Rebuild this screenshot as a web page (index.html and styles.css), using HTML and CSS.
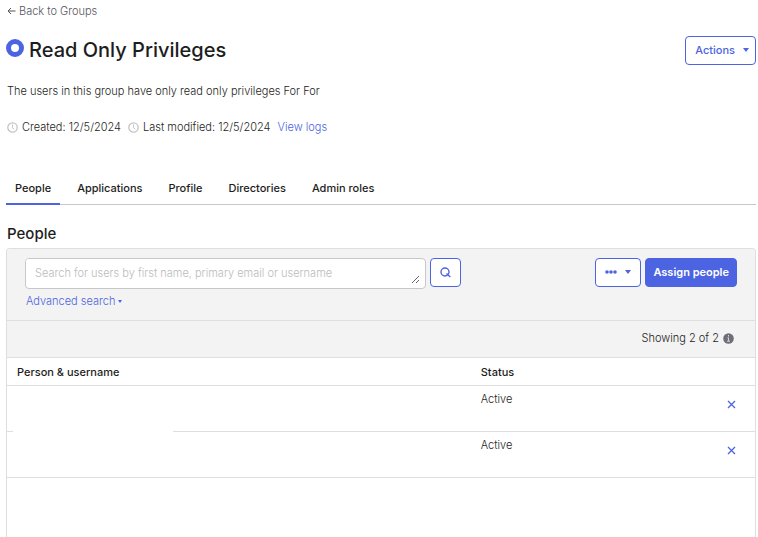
FILE: index.html
```html
<!DOCTYPE html>
<html lang="en">
<head>
    <meta charset="UTF-8">
    <meta name="viewport" content="width=device-width, initial-scale=1.0">
    <title>Read Only Privileges</title>
    <link rel="stylesheet" href="styles.css">
</head>
<body>
    <a href="#" class="back-link">
        <svg width="9" height="8" viewBox="0 0 9 8"><path d="M8.5 4H1M4 1L1 4l3 3" fill="none" stroke="currentColor"/></svg>
        Back to Groups
    </a>

    <header class="group-header">
        <svg class="group-icon" width="18" height="18" viewBox="0 0 18 18"><circle cx="9" cy="9" r="6.5" fill="none" stroke="#4c64e1" stroke-width="5"/></svg>
        <h1>Read Only Privileges</h1>
        <button type="button" class="button">Actions <span class="caret"></span></button>
    </header>

    <p class="description">The users in this group have only read only privileges For For</p>

    <div class="meta">
        <svg width="11" height="11" viewBox="0 0 11 11" fill="none" stroke="#c4c4c4"><circle cx="5.5" cy="5.5" r="4.7" stroke-width="1.3"/><path d="M5.5 2.5v3.2l1.7 1.7"/></svg>
        <span>Created: 12/5/2024</span>
        <svg width="11" height="11" viewBox="0 0 11 11" fill="none" stroke="#c4c4c4"><circle cx="5.5" cy="5.5" r="4.7" stroke-width="1.3"/><path d="M5.5 2.5v3.2l1.7 1.7"/></svg>
        <span>Last modified: 12/5/2024</span>
        <a href="#">View logs</a>
    </div>

    <nav class="tabs">
        <a href="#" class="active">People</a>
        <a href="#">Applications</a>
        <a href="#">Profile</a>
        <a href="#">Directories</a>
        <a href="#">Admin roles</a>
    </nav>

    <h2>People</h2>

    <section class="panel">
        <div class="toolbar">
            <form class="search">
                <div class="search-box">
                    <textarea rows="1" aria-label="Search for users" placeholder="Search for users by first name, primary email or username"></textarea>
                </div>
                <button type="button" class="button search-button" aria-label="Search">
                    <svg width="11" height="11" viewBox="0 0 11 11" fill="none" stroke="currentColor" stroke-width="1.4"><circle cx="5" cy="5" r="4"/><path d="M6.5 6.5l3.8 3.5"/></svg>
                </button>
            </form>
            <div class="toolbar-actions">
                <button type="button" class="button more-button" aria-label="More actions">
                    <svg width="12" height="4" viewBox="0 0 12 4" fill="currentColor"><circle cx="2" cy="2" r="1.8"/><circle cx="6" cy="2" r="1.8"/><circle cx="10" cy="2" r="1.8"/></svg>
                    <span class="caret"></span>
                </button>
                <button type="button" class="button primary">Assign people</button>
            </div>
            <a href="#" class="advanced">Advanced search <span class="caret small"></span></a>
        </div>

        <div class="summary">
            <span>Showing 2 of 2</span>
            <svg width="11" height="11" viewBox="0 0 11 11"><circle cx="5.5" cy="5.5" r="5.3" fill="#6e6e78"/><path d="M5.5 2v1.5M4.5 4.8h1v3M4 8.2h3" fill="none" stroke="#d8d8dc"/></svg>
        </div>

        <table>
            <thead>
                <tr>
                    <th class="person">Person &amp; username</th>
                    <th class="status">Status</th>
                    <th></th>
                </tr>
            </thead>
            <tbody>
                <tr>
                    <td class="person"><span class="hidden-name"></span></td>
                    <td>Active</td>
                    <td class="remove">
                        <button type="button" aria-label="Remove">
                            <svg width="9" height="9" viewBox="0 0 9 9"><path d="M1 1l7 7M8 1L1 8" stroke="currentColor" stroke-width="1.3"/></svg>
                        </button>
                    </td>
                </tr>
                <tr>
                    <td class="person"></td>
                    <td>Active</td>
                    <td class="remove">
                        <button type="button" aria-label="Remove">
                            <svg width="9" height="9" viewBox="0 0 9 9"><path d="M1 1l7 7M8 1L1 8" stroke="currentColor" stroke-width="1.3"/></svg>
                        </button>
                    </td>
                </tr>
            </tbody>
        </table>
    </section>
</body>
</html>
```
FILE: styles.css
```css
* {
    margin: 0;
    padding: 0;
    box-sizing: border-box;
}

body {
    display: flex;
    flex-direction: column;
    min-height: 100vh;
    padding: 3px 2px 0 6px;
    font-family: Inter, "Liberation Sans", sans-serif;
    font-size: 11px;
    font-weight: 300;
    line-height: 16px;
    color: #1d1d21;
    background-color: #fff;
}

a {
    color: #4c64e1;
    text-decoration: none;
}

svg {
    flex: none;
}

.back-link {
    display: flex;
    align-items: center;
    gap: 3px;
    padding-left: 1px;
    color: #55555c;
}

.group-header {
    display: flex;
    align-items: center;
    margin-top: 17px;
}

.group-icon {
    margin: 0 5px 5px 0;
}

h1 {
    flex: 1;
    padding-bottom: 2px;
    font-size: 20px;
    font-weight: 500;
    line-height: 26px;
}

.button {
    display: flex;
    align-items: center;
    justify-content: center;
    height: 29px;
    padding: 0 6px 2px 9px;
    border: 1px solid #4c64e1;
    border-radius: 4px;
    background-color: #fff;
    color: #4c64e1;
    font-family: inherit;
    font-size: 11px;
    font-weight: 500;
    cursor: pointer;
}

.caret {
    margin-left: 8px;
    border: 3px solid transparent;
    border-top: 4px solid #4c64e1;
    border-bottom: 0;
}

.caret.small {
    margin-left: 3px;
    border-width: 3px 2px 0;
}

.description {
    margin-top: 18px;
    padding-left: 1px;
}

.meta {
    display: flex;
    align-items: center;
    gap: 4px;
    margin-top: 20px;
    padding-left: 1px;
}

.meta span {
    margin-right: 3px;
}

.tabs {
    display: flex;
    gap: 8px;
    margin-top: 45px;
    border-bottom: 1px solid #c8c8c8;
}

.tabs a {
    height: 24px;
    margin-bottom: -1px;
    padding: 0 9px;
    color: #1d1d21;
    font-weight: 500;
}

.tabs .active {
    height: 25px;
    border-bottom: 2px solid #4c64e1;
}

h2 {
    margin-top: 18px;
    padding-left: 1px;
    font-size: 15px;
    font-weight: 500;
    line-height: 22px;
}

.panel {
    flex: 1;
    margin-top: 3px;
    border: 1px solid #dedede;
    border-bottom: 0;
    border-radius: 4px 4px 0 0;
}

.toolbar {
    display: grid;
    grid-template-columns: 1fr auto;
    padding: 9px 18px 11px;
    background-color: #f3f3f3;
    border-bottom: 1px solid #dedede;
    border-radius: 3px 3px 0 0;
}

.search {
    display: flex;
    gap: 4px;
    margin-right: 134px;
}

.search-box {
    display: flex;
    flex: 1;
    height: 31px;
    padding: 0 5px 4px 0;
    border: 1px solid #c8c8c8;
    border-radius: 4px;
    background-color: #fff;
}

textarea {
    flex: 1;
    min-width: 0;
    height: 25px;
    padding: 6px 0 0 9px;
    border: 0;
    border-radius: 3px;
    overflow: hidden;
    font: inherit;
}

textarea::placeholder {
    color: #bbb;
}

.search-button {
    width: 31px;
    padding: 0;
}

.toolbar-actions {
    display: flex;
    gap: 4px;
}

.more-button {
    width: 46px;
    padding: 0 0 2px;
}

.primary {
    padding: 0 7px 1px;
    background-color: #4c64e1;
    color: #fff;
    font-weight: 600;
}

.advanced {
    display: flex;
    align-items: center;
    margin-top: 4px;
    padding-left: 1px;
}

.summary {
    display: flex;
    align-items: center;
    justify-content: flex-end;
    gap: 4px;
    height: 37px;
    padding: 0 21px 2px 0;
    background-color: #f3f3f3;
    border-bottom: 1px solid #dedede;
}

table {
    width: 100%;
    border-collapse: separate;
    border-spacing: 0;
    table-layout: fixed;
}

th, td {
    padding: 5px 10px;
    border-bottom: 1px solid #dedede;
    text-align: left;
    vertical-align: top;
}

th {
    height: 28px;
    padding: 6px 10px 5px;
    font-weight: 500;
}

td {
    height: 46px;
}

.person {
    position: relative;
    width: 62%;
}

.status {
    width: 19%;
}

/* blank cover over the name and the rule below it */
.hidden-name {
    position: absolute;
    z-index: 1;
    top: 4px;
    left: 6px;
    width: 160px;
    height: 60px;
    background-color: #fff;
}

.remove {
    padding: 11px 19px 0;
    text-align: right;
}

.remove button {
    border: 0;
    background: none;
    color: #4c64e1;
    cursor: pointer;
}
```
